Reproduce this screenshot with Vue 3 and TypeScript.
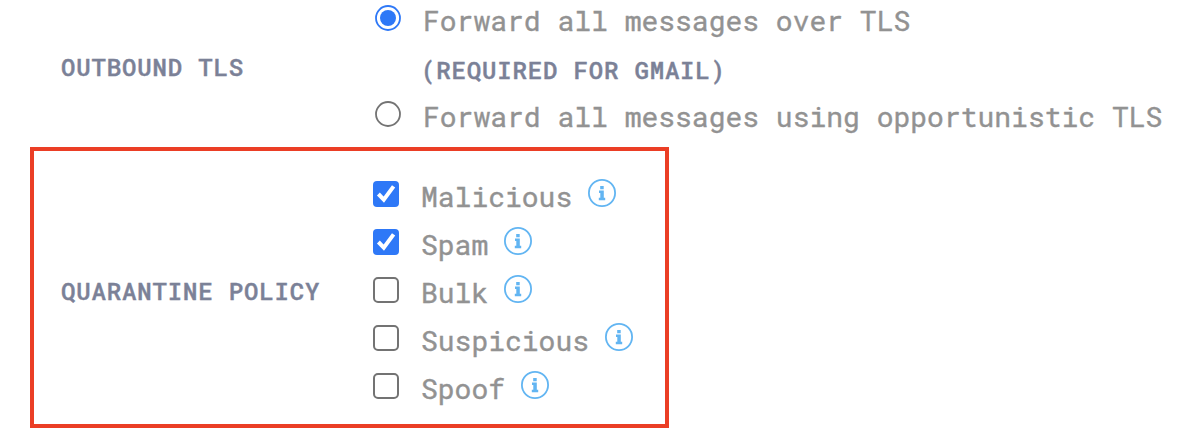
<script setup lang="ts">
import { ref } from 'vue'

interface Policy {
  name: string
  checked: boolean
}

const tlsMode = ref<'forced' | 'opportunistic'>('forced')
const policies = ref<Policy[]>([
  { name: 'Malicious', checked: true },
  { name: 'Spam', checked: true },
  { name: 'Bulk', checked: false },
  { name: 'Suspicious', checked: false },
  { name: 'Spoof', checked: false },
])
</script>

<template>
  <main class="settings">
    <section class="section outbound">
      <h2 class="heading">OUTBOUND TLS</h2>
      <div class="options">
        <label class="row radio-row">
          <input v-model="tlsMode" class="native" type="radio" name="tls" value="forced" />
          <svg class="control" viewBox="0 0 26 26">
            <circle class="ring" :class="{ on: tlsMode === 'forced' }" cx="13" cy="13" r="12" />
            <circle v-if="tlsMode === 'forced'" class="dot" cx="13" cy="13" r="8" />
          </svg>
          <span class="text">Forward all messages over TLS</span>
        </label>
        <div class="row note-row"><span class="heading note">(REQUIRED FOR GMAIL)</span></div>
        <label class="row radio-row">
          <input v-model="tlsMode" class="native" type="radio" name="tls" value="opportunistic" />
          <svg class="control" viewBox="0 0 26 26">
            <circle class="ring" :class="{ on: tlsMode === 'opportunistic' }" cx="13" cy="13" r="12" />
            <circle v-if="tlsMode === 'opportunistic'" class="dot" cx="13" cy="13" r="8" />
          </svg>
          <span class="text">Forward all messages using opportunistic TLS</span>
        </label>
      </div>
    </section>

    <section class="section quarantine">
      <h2 class="heading">QUARANTINE POLICY</h2>
      <div class="options">
        <label v-for="policy in policies" :key="policy.name" class="row">
          <input v-model="policy.checked" class="native" type="checkbox" />
          <svg class="control" viewBox="0 0 26 26">
            <template v-if="policy.checked">
              <rect class="fill" width="26" height="26" rx="4" />
              <path class="tick" d="M5.4 13 L10.8 18.6 L20.6 5.4" />
            </template>
            <rect v-else class="box" x="1" y="1" width="24" height="24" rx="4" />
          </svg>
          <span class="text">{{ policy.name }}</span>
          <svg class="info" viewBox="0 0 28 28">
            <circle cx="14" cy="14" r="13.1" />
            <path d="M12.2 6.9h3.5v3.3h-3.5zM11 11.6h4.8v7.2h1.4v2.5h-6.4v-2.5h1.5v-4.7h-1.3z" />
          </svg>
        </label>
      </div>
    </section>
  </main>
</template>

<style>
body {
  margin: 0;
  background: #fff;
}
</style>

<style scoped>
.settings {
  box-sizing: border-box;
  width: 1188px;
  height: 435px;
  overflow: hidden;
  background: #fff;
}

.section {
  display: grid;
  grid-template-columns: 312px max-content;
  box-sizing: border-box;
}

.outbound {
  height: 147px;
  padding-left: 61px;
  align-items: start;
}

.quarantine {
  width: 639px;
  height: 281px;
  margin-left: 30px;
  padding: 19px 0 0 27px;
  border: 4px solid #eb3e25;
  align-items: start;
}

.heading {
  margin: 0;
  font: 500 24px/32px "Roboto Mono", "Liberation Mono", monospace;
  letter-spacing: 0.84px;
  color: #7b8197;
  -webkit-text-stroke: 0.4px #7b8197;
  white-space: pre;
}

.outbound > .heading {
  padding-top: 51px;
}

.quarantine > .heading {
  padding-top: 105px;
}

.row {
  display: flex;
  height: 48px;
  align-items: center;
}

.outbound .options {
  margin-top: -6px;
}

.radio-row {
  padding-left: 2px;
}

.note-row {
  padding-left: 48px;
}

.note {
  padding-top: 8px;
}

.native {
  appearance: none;
  width: 0;
  height: 0;
  margin: 0;
}

.control {
  flex: none;
  width: 26px;
  height: 26px;
}

.ring {
  fill: #fff;
  stroke: #737373;
  stroke-width: 1.8;
}

.ring.on {
  stroke: #2e78f7;
}

.dot,
.fill {
  fill: #2e78f7;
}

.tick {
  fill: none;
  stroke: #fff;
  stroke-width: 4;
}

.box {
  fill: #fff;
  stroke: #737373;
  stroke-width: 2;
}

.text {
  margin-left: 22px;
  padding-top: 5px;
  font: 400 28px/32px "Roboto Mono", "Liberation Mono", monospace;
  color: #929292;
  -webkit-text-stroke: 0.4px #929292;
  white-space: pre;
}

.info {
  flex: none;
  width: 28px;
  height: 28px;
  margin: -2px 0 0 16px;
}

.info circle {
  fill: none;
  stroke: #62b5f2;
  stroke-width: 1.8;
}

.info path {
  fill: #62b5f2;
}
</style>
